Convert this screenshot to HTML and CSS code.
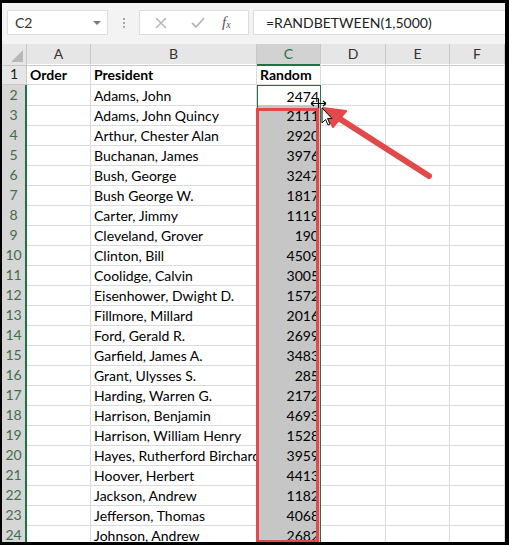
FILE: index.html
```html
<!DOCTYPE html>
<html>
<head>
<meta charset="utf-8">
<link rel="stylesheet" href="styles.css">
</head>
<body>
<div class="frame">
  <div class="fbar">
    <div class="namebox"><span class="ref">C2</span><span class="drop"></span></div>
    <div class="grip"><i></i><i></i><i></i></div>
    <div class="btns">
      <svg class="ico x" width="14" height="14" viewBox="0 0 14 14"><path d="M2 2 L12 12 M12 2 L2 12" stroke="#b8b8b8" stroke-width="1.6" fill="none"/></svg>
      <svg class="ico ok" width="16" height="14" viewBox="0 0 16 14"><path d="M2 7 L6 11 L14 2" stroke="#b8b8b8" stroke-width="1.8" fill="none"/></svg>
      <span class="fx">f<sub>x</sub></span>
    </div>
    <div class="formula">=RANDBETWEEN(1,5000)</div>
  </div>
  <div class="sheet">
    <div class="row head">
      <div class="rh corner"><span class="tri"></span></div>
      <div class="ch">A</div><div class="ch">B</div><div class="ch sel">C</div><div class="ch">D</div><div class="ch">E</div><div class="ch">F</div>
    </div>
    <div class="row">
      <div class="rh">1</div>
      <div class="c b">Order</div><div class="c b">President</div><div class="c b">Random</div><div class="c"></div><div class="c"></div><div class="c"></div>
    </div>
    <div class="row hl">
      <div class="rh">2</div>
      <div class="c"></div><div class="c">Adams, John</div><div class="c n active">2474</div><div class="c"></div><div class="c"></div><div class="c"></div>
    </div>
    <div class="row hl"><div class="rh">3</div><div class="c"></div><div class="c">Adams, John Quincy</div><div class="c n s">2111</div><div class="c"></div><div class="c"></div><div class="c"></div></div>
    <div class="row hl"><div class="rh">4</div><div class="c"></div><div class="c">Arthur, Chester Alan</div><div class="c n s">2920</div><div class="c"></div><div class="c"></div><div class="c"></div></div>
    <div class="row hl"><div class="rh">5</div><div class="c"></div><div class="c">Buchanan, James</div><div class="c n s">3976</div><div class="c"></div><div class="c"></div><div class="c"></div></div>
    <div class="row hl"><div class="rh">6</div><div class="c"></div><div class="c">Bush, George</div><div class="c n s">3247</div><div class="c"></div><div class="c"></div><div class="c"></div></div>
    <div class="row hl"><div class="rh">7</div><div class="c"></div><div class="c">Bush George W.</div><div class="c n s">1817</div><div class="c"></div><div class="c"></div><div class="c"></div></div>
    <div class="row hl"><div class="rh">8</div><div class="c"></div><div class="c">Carter, Jimmy</div><div class="c n s">1119</div><div class="c"></div><div class="c"></div><div class="c"></div></div>
    <div class="row hl"><div class="rh">9</div><div class="c"></div><div class="c">Cleveland, Grover</div><div class="c n s">190</div><div class="c"></div><div class="c"></div><div class="c"></div></div>
    <div class="row hl"><div class="rh">10</div><div class="c"></div><div class="c">Clinton, Bill</div><div class="c n s">4509</div><div class="c"></div><div class="c"></div><div class="c"></div></div>
    <div class="row hl"><div class="rh">11</div><div class="c"></div><div class="c">Coolidge, Calvin</div><div class="c n s">3005</div><div class="c"></div><div class="c"></div><div class="c"></div></div>
    <div class="row hl"><div class="rh">12</div><div class="c"></div><div class="c">Eisenhower, Dwight D.</div><div class="c n s">1572</div><div class="c"></div><div class="c"></div><div class="c"></div></div>
    <div class="row hl"><div class="rh">13</div><div class="c"></div><div class="c">Fillmore, Millard</div><div class="c n s">2016</div><div class="c"></div><div class="c"></div><div class="c"></div></div>
    <div class="row hl"><div class="rh">14</div><div class="c"></div><div class="c">Ford, Gerald R.</div><div class="c n s">2699</div><div class="c"></div><div class="c"></div><div class="c"></div></div>
    <div class="row hl"><div class="rh">15</div><div class="c"></div><div class="c">Garfield, James A.</div><div class="c n s">3483</div><div class="c"></div><div class="c"></div><div class="c"></div></div>
    <div class="row hl"><div class="rh">16</div><div class="c"></div><div class="c">Grant, Ulysses S.</div><div class="c n s">285</div><div class="c"></div><div class="c"></div><div class="c"></div></div>
    <div class="row hl"><div class="rh">17</div><div class="c"></div><div class="c">Harding, Warren G.</div><div class="c n s">2172</div><div class="c"></div><div class="c"></div><div class="c"></div></div>
    <div class="row hl"><div class="rh">18</div><div class="c"></div><div class="c">Harrison, Benjamin</div><div class="c n s">4693</div><div class="c"></div><div class="c"></div><div class="c"></div></div>
    <div class="row hl"><div class="rh">19</div><div class="c"></div><div class="c">Harrison, William Henry</div><div class="c n s">1528</div><div class="c"></div><div class="c"></div><div class="c"></div></div>
    <div class="row hl"><div class="rh">20</div><div class="c"></div><div class="c">Hayes, Rutherford Birchard</div><div class="c n s">3959</div><div class="c"></div><div class="c"></div><div class="c"></div></div>
    <div class="row hl"><div class="rh">21</div><div class="c"></div><div class="c">Hoover, Herbert</div><div class="c n s">4413</div><div class="c"></div><div class="c"></div><div class="c"></div></div>
    <div class="row hl"><div class="rh">22</div><div class="c"></div><div class="c">Jackson, Andrew</div><div class="c n s">1182</div><div class="c"></div><div class="c"></div><div class="c"></div></div>
    <div class="row hl"><div class="rh">23</div><div class="c"></div><div class="c">Jefferson, Thomas</div><div class="c n s">4068</div><div class="c"></div><div class="c"></div><div class="c"></div></div>
    <div class="row hl"><div class="rh">24</div><div class="c"></div><div class="c">Johnson, Andrew</div><div class="c n s">2682</div><div class="c"></div><div class="c"></div><div class="c"></div></div>
  </div>
  <svg class="overlay" width="509" height="545" viewBox="0 0 509 545">
    <rect x="257.5" y="109.5" width="60" height="432" fill="none" stroke="#e2494b" stroke-width="3"/>
    <path d="M429 176 L340 119" stroke="#e2494b" stroke-width="6" stroke-linecap="round" fill="none"/>
    <path d="M323 108 L346 111 L333 127 Z" fill="#e2494b" stroke="#e2494b" stroke-width="2" stroke-linejoin="round"/>
    <g class="cursor">
      <path d="M322 108 L322 123 L325.5 119.5 L328 125 L330 124 L327.5 118.5 L332 118.5 Z" fill="#fff" stroke="#000" stroke-width="1"/>
      <path d="M311 103.5 H326 M311 103.5 L314 101 M311 103.5 L314 106 M326 103.5 L323 101 M326 103.5 L323 106 M318.5 99 V108" stroke="#000" stroke-width="1.2" fill="none"/>
    </g>
  </svg>
</div>
</body>
</html>
```
FILE: styles.css
```css
* { box-sizing: border-box; }
html, body { margin: 0; padding: 0; background: #000; }
body { width: 509px; height: 545px; overflow: hidden; }
.frame {
  position: relative;
  margin: 3px 4px 0 2px;
  height: 539px;
  background: #fff;
  overflow: hidden;
  font-family: "Lato", "Liberation Sans", sans-serif;
  font-size: 14px;
  color: #000;
}
.fbar {
  height: 41px;
  background: #f3f3f3;
  display: flex;
  align-items: flex-start;
  padding-top: 7px;
  padding-left: 5px;
}
.namebox {
  width: 101px;
  height: 25px;
  background: #fff;
  border: 1px solid #dcdcdc;
  display: flex;
  align-items: center;
  justify-content: space-between;
  padding: 0 6px 0 7px;
  color: #333;
  font-size: 14px;
}
.drop {
  width: 0; height: 0;
  border-left: 4px solid transparent;
  border-right: 4px solid transparent;
  border-top: 4px solid #7a7a7a;
}
.grip {
  width: 31px;
  height: 25px;
  display: flex;
  flex-direction: column;
  align-items: center;
  justify-content: center;
  gap: 2px;
}
.grip i { width: 2px; height: 2px; background: #a8a8a8; display: block; }
.btns {
  width: 110px;
  height: 25px;
  background: #fff;
  border: 1px solid #dcdcdc;
  display: flex;
  align-items: center;
  padding-left: 14px;
}
.ico.x { margin-right: 22px; }
.ico.ok { margin-right: 16px; }
.fx {
  font-family: "Liberation Serif", serif;
  font-style: italic;
  font-size: 15px;
  color: #555;
}
.fx sub { font-size: 10px; vertical-align: -1px; }
.formula {
  flex: 1;
  margin-left: 4px;
  height: 25px;
  background: #fff;
  border: 1px solid #dcdcdc;
  border-right: none;
  padding-left: 12px;
  line-height: 23px;
  color: #222;
  font-size: 14px;
}
.sheet { display: flex; flex-direction: column; }
.row {
  display: grid;
  grid-template-columns: 25px 64px 166px 64px 65px 64px 1fr;
  height: 20px;
}
.row.head { height: 20px; background: #e6e6e6; }
.row:nth-child(2) { height: 21px; }
.rh {
  background: #e6e6e6;
  border-right: 1px solid #c8c8c8;
  border-bottom: 1px solid #c8c8c8;
  text-align: center;
  line-height: 20px;
  color: #222;
  font-size: 14px;
}
.row.hl .rh {
  background: #d6d6d6;
  color: #3f6f4d;
  border-right: 2px solid #217346;
  border-bottom-color: #bdbdbd;
}
.corner { position: relative; }
.tri {
  position: absolute;
  right: 3px; bottom: 3px;
  width: 0; height: 0;
  border-left: 12px solid transparent;
  border-bottom: 12px solid #b7b7b7;
}
.ch {
  border-right: 1px solid #c8c8c8;
  border-bottom: 1px solid #c8c8c8;
  text-align: center;
  line-height: 20px;
  color: #333;
  font-size: 14px;
}
.ch.sel {
  background: #d2d2d2;
  color: #217346;
  border-bottom: 2px solid #217346;
}
.c {
  border-right: 1px solid #dadada;
  border-bottom: 1px solid #dadada;
  white-space: nowrap;
  overflow: hidden;
  padding: 0 3px;
  line-height: 21px;
}
.c.b { font-weight: bold; }
.c.n { text-align: right; padding-right: 1px; }
.c.s { background: #c6c6c6; border-right: 1px solid #217346; border-left: 1px solid #217346; }
.c.active { border: 1px solid #217346; border-bottom: 1px solid #217346; }
.overlay { position: absolute; left: -2px; top: -3px; pointer-events: none; }
```
